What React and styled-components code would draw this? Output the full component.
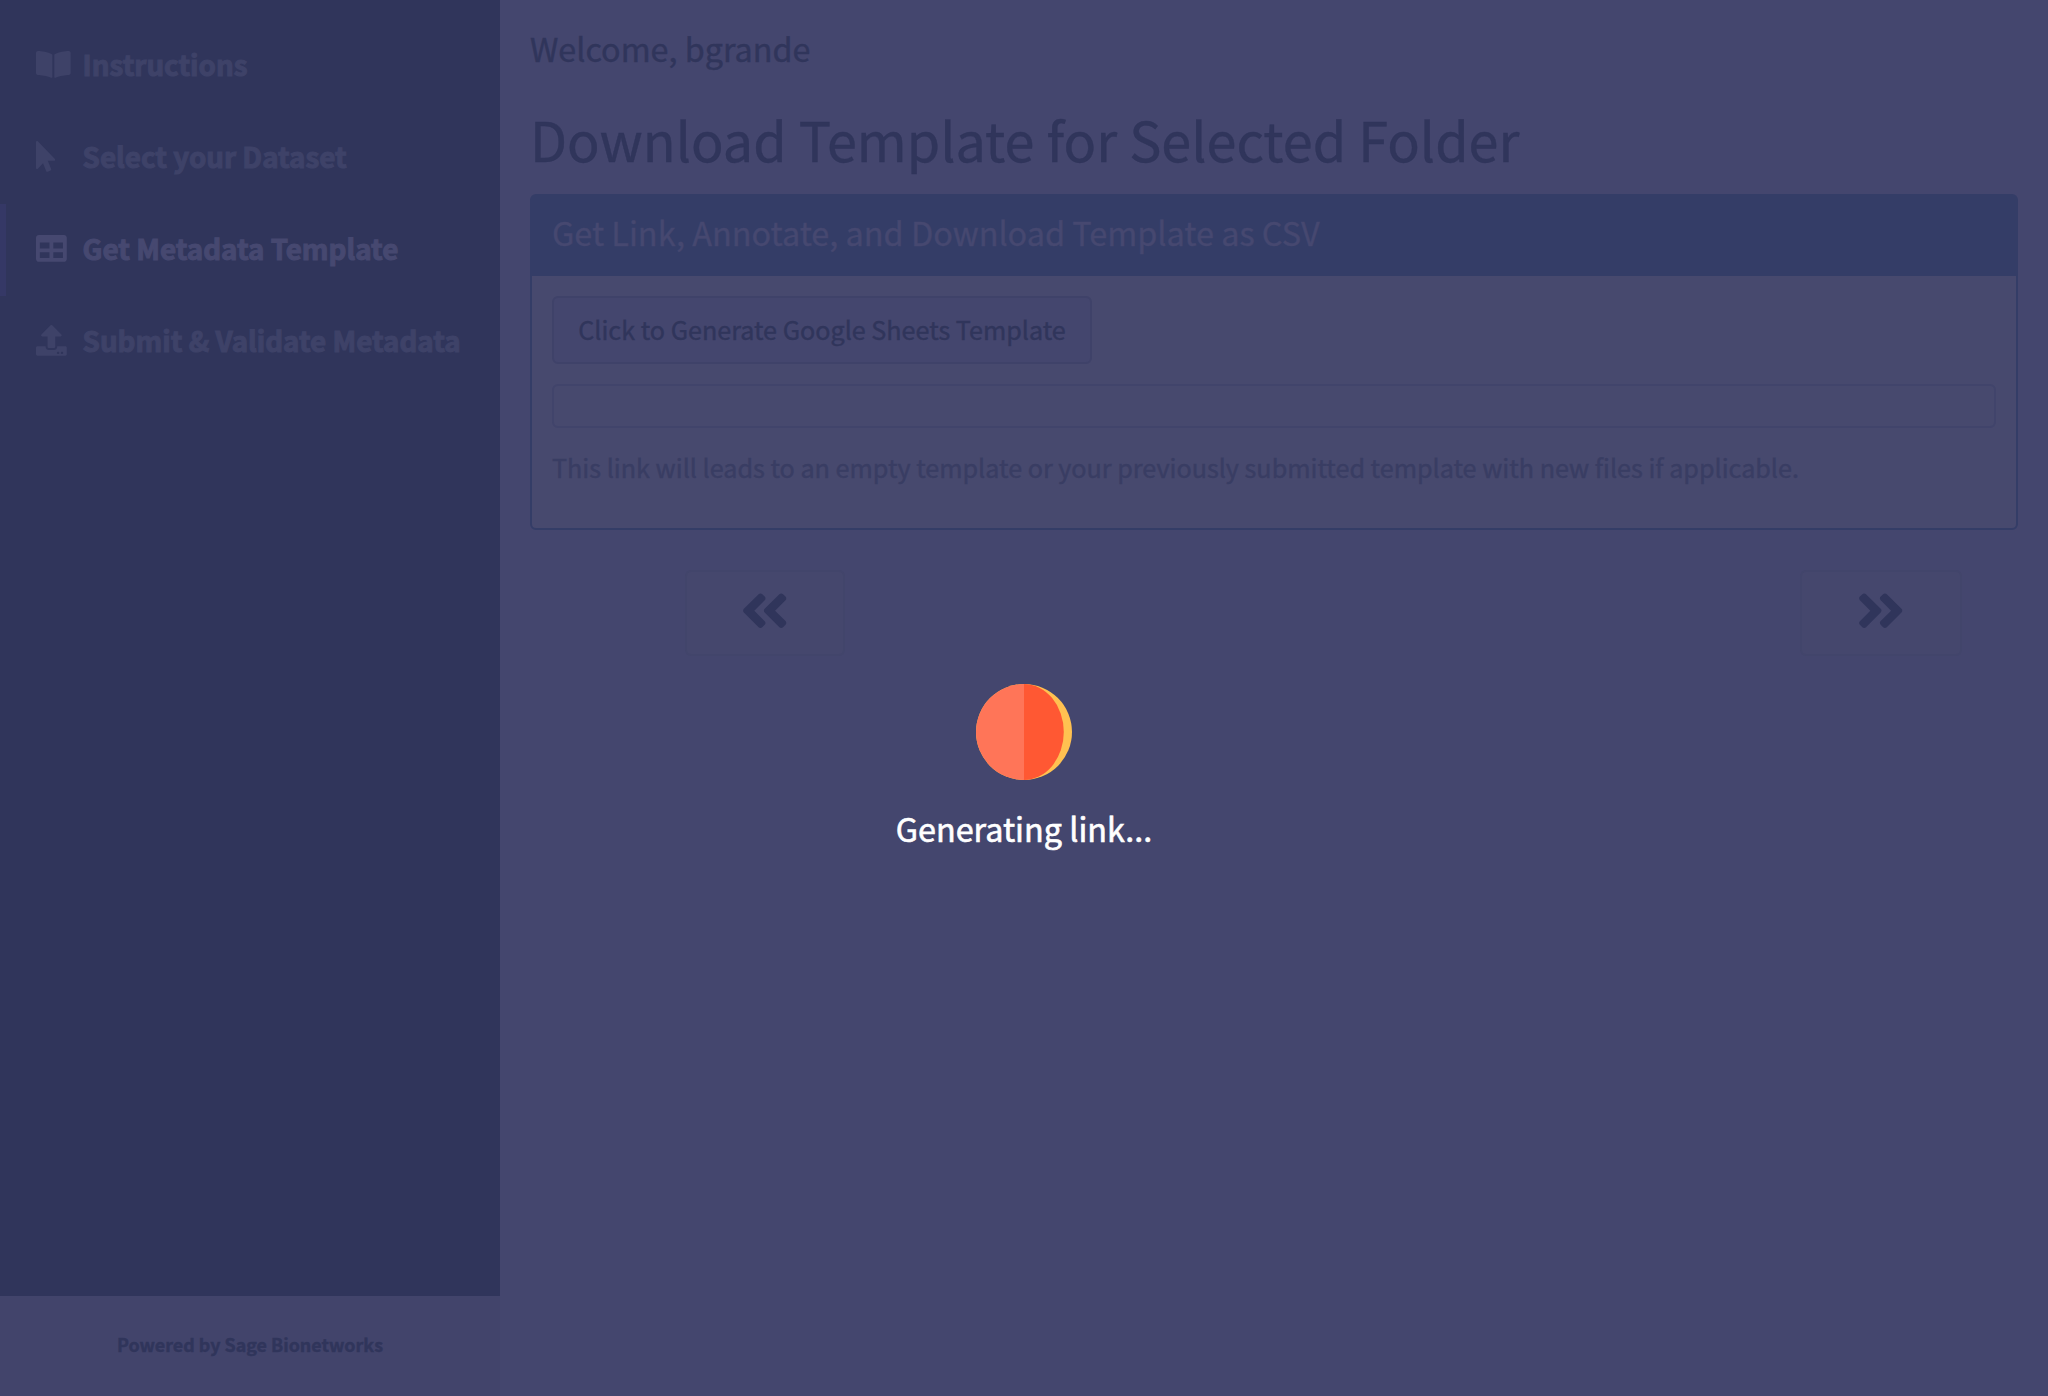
import React from "react";
import styled, { createGlobalStyle } from "styled-components";
import {
  FaBookOpen,
  FaMousePointer,
  FaTable,
  FaUpload,
  FaAngleDoubleLeft,
  FaAngleDoubleRight,
} from "react-icons/fa";

const Global = createGlobalStyle`
  *, *::before, *::after { box-sizing: border-box; }
  html, body { margin: 0; padding: 0; }
  body {
    background: #44466e;
    font-family: "Noto Sans CJK SC", "Noto Sans", sans-serif;
    color: #30355b;
    -webkit-text-stroke: 0.4px currentColor;
  }
  h1, h2, h3, p { margin: 0; font-weight: 400; }
`;

const Page = styled.div`
  position: relative;
  display: flex;
  width: 2048px;
  height: 1396px;
  overflow: hidden;
`;

const Sidebar = styled.aside`
  display: flex;
  flex-direction: column;
  flex: 0 0 500px;
  background: #30355b;
`;

const Menu = styled.nav`
  display: flex;
  flex-direction: column;
  flex: 1;
  padding-top: 20px;
`;

const MenuItem = styled.a`
  display: flex;
  align-items: center;
  height: 92px;
  padding-left: 30px;
  border-left: 6px solid ${(p) => (p.$active ? "#353866" : "transparent")};
  color: ${(p) => (p.$active ? "#464870" : "#3e4268")};
  font-size: 27.75px;
  font-weight: 700;
  line-height: 40px;
  white-space: nowrap;
  -webkit-text-stroke-width: 1.1px;
`;

const MenuIcon = styled.span`
  display: flex;
  flex: 0 0 46.6px;
  margin-bottom: 3px;
  font-size: 30.8px;

  svg {
    width: ${(p) => p.$ratio}em;
    height: 1em;
  }
`;

const MenuLabel = styled.span`
  padding-bottom: 4px;
`;

const SidebarFooter = styled.footer`
  display: flex;
  align-items: center;
  justify-content: center;
  height: 100px;
  padding-bottom: 4px;
  background: #42446b;
  font-size: 17.9px;
  font-weight: 700;
  line-height: 26px;
`;

const Content = styled.main`
  flex: 1;
  padding: 24px 30px 0;
`;

const Welcome = styled.h3`
  font-size: 32.3px;
  line-height: 48px;
`;

const Title = styled.h1`
  margin-top: 25px;
  font-size: 53.93px;
  line-height: 84px;
  white-space: nowrap;
`;

const Card = styled.section`
  height: 336px;
  margin-top: 13px;
  border: 2px solid #343d67;
  border-radius: 6px;
  background: #47496e;
`;

const CardHeader = styled.header`
  height: 80px;
  padding: 12px 20px;
  background: #343d67;
  color: #464870;
  font-size: 32.4px;
  line-height: 48px;
`;

const CardBody = styled.div`
  display: flex;
  flex-direction: column;
  align-items: flex-start;
  padding: 20px;
`;

const GenerateButton = styled.button`
  height: 68px;
  width: 540px;
  padding: 0 0 3px;
  border: 2px solid #3f4269;
  border-radius: 6px;
  background: #44466e;
  color: #30355b;
  font-family: inherit;
  font-size: 25.15px;
  line-height: 38px;
  white-space: nowrap;
`;

const LinkBox = styled.div`
  align-self: stretch;
  height: 44px;
  margin-top: 20px;
  border: 2px solid #41446b;
  border-radius: 6px;
`;

const HelpText = styled.p`
  margin-top: 20px;
  color: #393d63;
  font-size: 25.17px;
  line-height: 38px;
  white-space: nowrap;
`;

const Pager = styled.div`
  display: flex;
  justify-content: space-between;
  margin-top: 40px;
  padding: 0 56px 0 155px;
`;

const PagerButton = styled.button`
  display: flex;
  align-items: center;
  justify-content: center;
  width: ${(p) => p.$width}px;
  height: 86px;
  padding: 0 0 4px;
  border: 2px solid #42456b;
  border-radius: 6px;
  background: #45476d;
  color: #30355b;
  font-size: 55.4px;
`;

const Overlay = styled.div`
  position: absolute;
  inset: 0;
  display: flex;
  flex-direction: column;
  align-items: center;
  padding-top: 684px;
  color: #ffffff;
`;

const Spinner = styled.svg`
  display: block;
  width: 96px;
  height: 96px;
`;

const LoadingText = styled.h3`
  margin-top: 24px;
  font-size: 32.35px;
  line-height: 48px;
  -webkit-text-stroke-width: 0.6px;
`;

const items = [
  { label: "Instructions", Icon: FaBookOpen, ratio: 1.125 },
  { label: "Select your Dataset", Icon: FaMousePointer, ratio: 0.625 },
  { label: "Get Metadata Template", Icon: FaTable, ratio: 1, active: true },
  { label: "Submit & Validate Metadata", Icon: FaUpload, ratio: 1 },
];

export default function App() {
  return (
    <Page>
      <Global />
      <Sidebar>
        <Menu>
          {items.map(({ label, Icon, ratio, active }) => (
            <MenuItem key={label} $active={active}>
              <MenuIcon $ratio={ratio}>
                <Icon />
              </MenuIcon>
              <MenuLabel>{label}</MenuLabel>
            </MenuItem>
          ))}
        </Menu>
        <SidebarFooter>Powered by Sage Bionetworks</SidebarFooter>
      </Sidebar>
      <Content>
        <Welcome>Welcome, bgrande</Welcome>
        <Title>Download Template for Selected Folder</Title>
        <Card>
          <CardHeader>Get Link, Annotate, and Download Template as CSV</CardHeader>
          <CardBody>
            <GenerateButton>Click to Generate Google Sheets Template</GenerateButton>
            <LinkBox />
            <HelpText>
              This link will leads to an empty template or your previously submitted template with
              new files if applicable.
            </HelpText>
          </CardBody>
        </Card>
        <Pager>
          <PagerButton $width={160} aria-label="Previous">
            <FaAngleDoubleLeft />
          </PagerButton>
          <PagerButton $width={162} aria-label="Next">
            <FaAngleDoubleRight />
          </PagerButton>
        </Pager>
      </Content>
      <Overlay>
        <Spinner viewBox="0 0 96 96">
          <circle cx="48" cy="48" r="48" fill="#ffc151" />
          <path d="M48 0A48 48 0 0 0 48 96Z" fill="#ff7558" />
          <path d="M48 0A39.8 48 0 0 1 48 96Z" fill="#ff5833" />
        </Spinner>
        <LoadingText>Generating link...</LoadingText>
      </Overlay>
    </Page>
  );
}
